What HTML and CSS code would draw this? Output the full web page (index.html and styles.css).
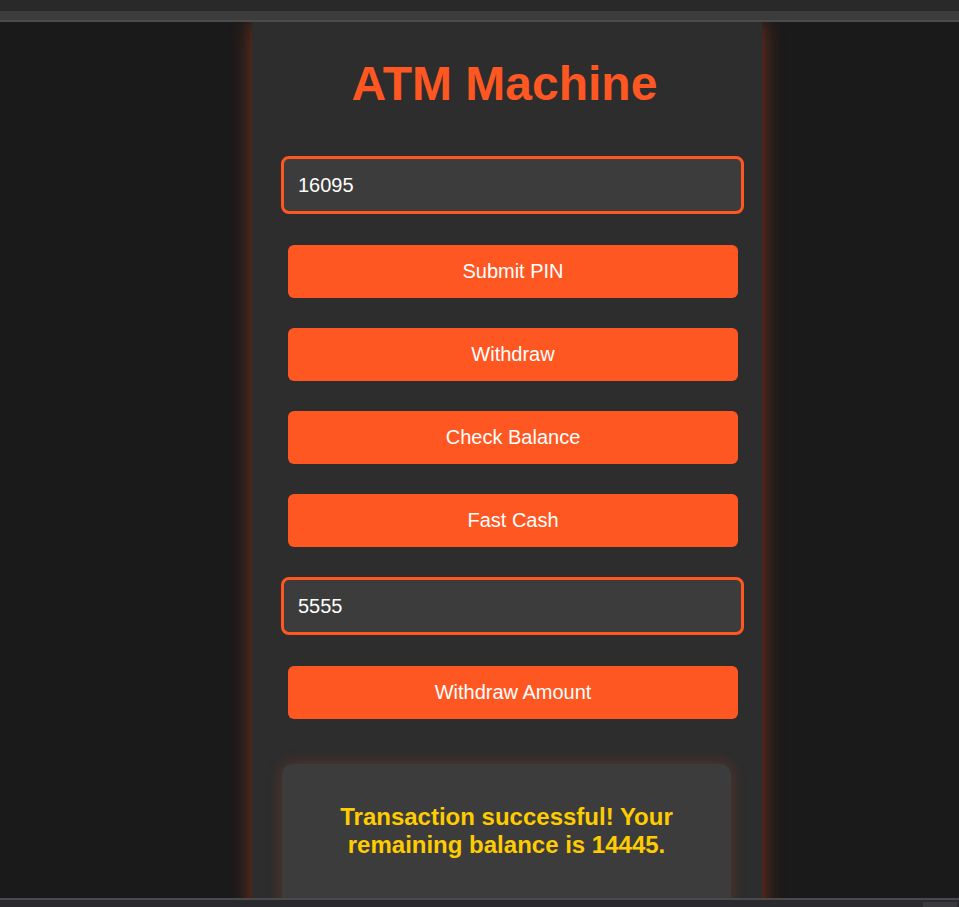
FILE: index.html
```html
<!DOCTYPE html>
<html lang="en">
<head>
<meta charset="utf-8">
<title>ATM Machine</title>
<link rel="stylesheet" href="styles.css">
</head>
<body>
<div class="chrome-top">
  <div class="chrome-tabs"></div>
  <div class="chrome-bar"></div>
  <div class="chrome-line"></div>
</div>
<div class="viewport">
  <main class="atm">
    <h1 class="title">ATM Machine</h1>
    <input class="field field-pin" type="text" value="16095">
    <button class="btn btn-first">Submit PIN</button>
    <button class="btn">Withdraw</button>
    <button class="btn">Check Balance</button>
    <button class="btn">Fast Cash</button>
    <input class="field field-amount" type="text" value="5555">
    <button class="btn btn-after-field">Withdraw Amount</button>
    <div class="message">
      <p class="message-text">Transaction successful! Your remaining balance is 14445.</p>
    </div>
  </main>
</div>
<div class="chrome-bottom">
  <div class="chrome-bottom-line"></div>
  <div class="chrome-bottom-bar"><span class="thumb"></span></div>
</div>
</body>
</html>
```
FILE: styles.css
```css
html, body {
  margin: 0;
  padding: 0;
}
body {
  width: 959px;
  height: 907px;
  overflow: hidden;
  background: #1a1a1a;
  font-family: "Liberation Sans", Arial, sans-serif;
  display: flex;
  flex-direction: column;
}
.chrome-top {
  flex: 0 0 22px;
  display: flex;
  flex-direction: column;
}
.chrome-tabs {
  height: 11px;
  background: #292929;
}
.chrome-bar {
  height: 9px;
  background: #3c3c3c;
}
.chrome-line {
  height: 2px;
  background: #4b4b4b;
}
.viewport {
  flex: 1 1 auto;
  overflow: hidden;
  display: flex;
  padding-left: 252px;
}
.atm {
  width: 510px;
  min-height: 1000px;
  box-sizing: border-box;
  background: #2d2d2d;
  box-shadow: 0 0 20px rgba(255, 87, 34, 0.45);
  padding: 34px 0 0 29px;
  display: flex;
  flex-direction: column;
  align-items: flex-start;
}
.title {
  margin: 0;
  align-self: stretch;
  margin-left: -29px;
  padding-right: 5px;
  text-align: center;
  color: #ff5722;
  font-size: 48px;
  font-weight: bold;
  line-height: 55px;
}
.field {
  box-sizing: border-box;
  width: 463px;
  height: 58px;
  margin: 45px 0 0 0;
  padding: 0 14px;
  border: 3px solid #ff5722;
  border-radius: 8px;
  background: #3c3c3c;
  color: #ffffff;
  font-family: "Liberation Sans", Arial, sans-serif;
  font-size: 20px;
  outline: none;
}
.field-amount {
  margin-top: 30px;
}
.btn {
  box-sizing: border-box;
  width: 450px;
  height: 53px;
  margin: 30px 0 0 7px;
  border: none;
  border-radius: 6px;
  background: #ff5722;
  color: #ffffff;
  font-family: "Liberation Sans", Arial, sans-serif;
  font-size: 20px;
  padding: 0;
}
.btn-first,
.btn-after-field {
  margin-top: 31px;
}
.message {
  box-sizing: border-box;
  width: 449px;
  height: 150px;
  margin: 45px 0 0 1px;
  padding: 39px 16px 0;
  background: #3c3c3c;
  border-radius: 10px;
  box-shadow: 0 0 15px rgba(255, 87, 34, 0.22);
}
.message-text {
  margin: 0;
  text-align: center;
  color: #ffcc00;
  font-weight: bold;
  font-size: 24px;
  line-height: 28px;
}
.chrome-bottom {
  flex: 0 0 9px;
  display: flex;
  flex-direction: column;
}
.chrome-bottom-line {
  height: 2px;
  background: #4a4a4a;
}
.chrome-bottom-bar {
  flex: 1;
  background: #2a2a2e;
  display: flex;
  justify-content: flex-end;
  align-items: flex-end;
}
.thumb {
  width: 34px;
  height: 5px;
  background: #3a3a3e;
  margin-right: 2px;
}
```
